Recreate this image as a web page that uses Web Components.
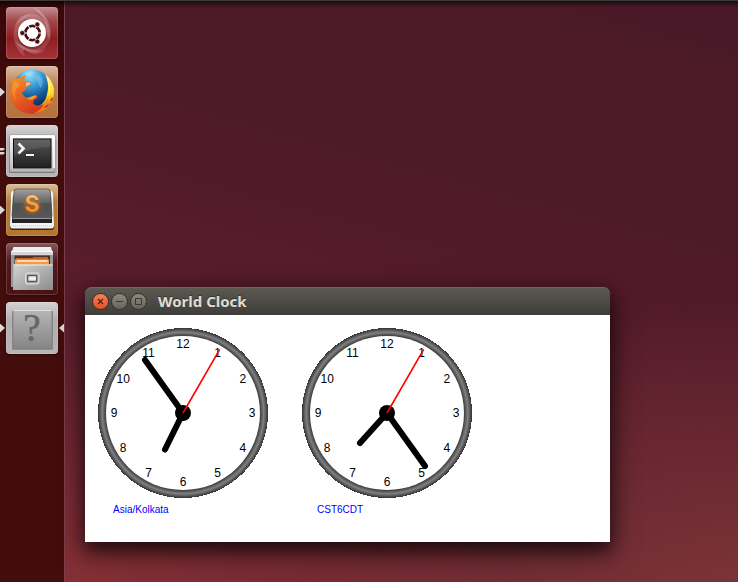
<!DOCTYPE html>
<html lang="en">
<head>
<meta charset="utf-8">
<title>World Clock</title>
<style>
html,body{height:100%;margin:0}
body{font-family:"Liberation Sans",Arial,sans-serif;overflow:hidden}
</style>
</head>
<body>
<desktop-shell>
  <launcher-bar slot="launcher">
    <launcher-tile label="Search your computer" tone="red">
      <svg viewBox="0 0 52 52" aria-hidden="true">
        <defs>
          <linearGradient id="sw" x1="0" y1="0" x2="1" y2="1"><stop offset="0" stop-color="#fff" stop-opacity=".45"/><stop offset="1" stop-color="#fff" stop-opacity=".05"/></linearGradient>
        </defs>
        <path d="M8 22C10 8 25 2 36 11C43 16 46 26 43 33C40 18 31 10 20 12C13 14 9 17 8 22Z" fill="#fff" opacity=".18"/>
        <path d="M26 0C37 4 45 14 45 27C44 36 39 43 31 45C22 46 14 42 10 35C18 42 31 42 37 34C45 23 39 8 26 0Z" fill="url(#sw)"/>
        <path d="M21 51C11 45 6 34 8 23C10 14 16 9 24 7C14 13 11 24 14 33C18 42 30 46 40 42C32 49 25 48 18 42C16 45 18 49 21 51Z" fill="#fff" opacity=".16"/>
        <circle cx="26" cy="28" r="14.500" fill="#500" opacity=".35"/>
        <circle cx="26" cy="26" r="14" fill="#fff"/>
        <circle cx="26.500" cy="26" r="7.200" fill="none" stroke="#4b0f12" stroke-width="2.800"/>
        <path d="M26.500 26H17M26.500 26L32 16.500M26.500 26L32 35.500M26.500 26H37M26.500 26L21 16.500M26.500 26L21 35.500" stroke="#fff"/>
        <circle cx="26.500" cy="26" r="5.600" fill="#fff"/>
        <g fill="#4b0f12" stroke="#fff" stroke-width=".6"><circle cx="16.300" cy="26" r="2.500"/><circle cx="31.300" cy="17.400" r="2.500"/><circle cx="31.300" cy="34.600" r="2.500"/></g>
      </svg>
    </launcher-tile>
    <launcher-tile label="Firefox Web Browser" tone="tan" windows="1">
      <svg viewBox="0 0 52 52" aria-hidden="true">
        <defs>
          <radialGradient id="globe" cx=".42" cy=".12" r=".9"><stop offset="0" stop-color="#9be1fb"/><stop offset=".35" stop-color="#3b9fd8"/><stop offset=".7" stop-color="#135591"/><stop offset="1" stop-color="#0f2456"/></radialGradient>
          <linearGradient id="fox" x1="0" y1="0" x2=".5" y2="1"><stop offset="0" stop-color="#f39a2c"/><stop offset=".45" stop-color="#ed6b23"/><stop offset="1" stop-color="#d83c1c"/></linearGradient>
          <linearGradient id="tail" x1="0" y1="0" x2="0" y2="1"><stop offset="0" stop-color="#fff7a0"/><stop offset=".5" stop-color="#ffd91f"/><stop offset="1" stop-color="#ee7d1d"/></linearGradient>
        </defs>
        <circle cx="26" cy="26.500" r="21.500" fill="#5d2607" opacity=".3"/>
        <circle cx="26.500" cy="22.500" r="19" fill="url(#globe)"/>
        <path d="M15 10C19 5 25 4 30 7C26 7 24 9 20 10C18 12 17 12 15 10ZM32 9C37 11 38 17 35 22C31 20 34 15 30 13Z" fill="#b0e4f4" opacity=".3"/>
        <path d="M39 8C45 13 49 20 48 28C47 38 39 46 29 47L26 42C34 41 40 36 41 28C43 22 42 14 39 8Z" fill="url(#tail)"/>
        <path d="M43 29C41 35 38 38 35 39L39 38C36 42 31 44 26 44L28 47C40 47 48 38 48 26C47 32 46 34 45 35L46 29Q44 34 42 36Z" fill="#f17a1a" opacity=".7"/>
        <path d="M40 11C44 18 44 25 42 31C46 24 44 16 40 11Z" fill="#fffbd2"/>
        <path d="M6 9C6 12 6 13 8 14C10 12 13 12 14 12C16 10 18 9 20 9C18 12 18 14 19 16C22 15 25 16 25 18C24 20 22 20 20 22C21 25 18 25 16 26C16 29 19 32 22 32C26 32 27 29 31 30C32 31 31 33 28 34C25 39 31 41 38 38C35 44 30 47.500 25 47.500C13 47.500 4 38 4 27C4 22 6 20 6 17C4 14 5 11 6 9Z" fill="url(#fox)"/>
        <path d="M8 15C5 21 6 31 12 37C7 30 8 23 14 19C12 17 11 15 8 15Z" fill="#f8a032" opacity=".65"/>
        <path d="M20 17C22 16 24 17 25 18C23 19 21 19 20 21Z" fill="#f5c5a1"/>
        <path d="M17 27C17 31 21 33 24 31C27 30 29 29 31 30C29 31 29 32 27 33C24 35 18 32 17 27Z" fill="#f99b35"/>
        <path d="M37 42L44 37L41 41ZM44 34L47 31L46 35Z" fill="#9a3324"/>
      </svg>
    </launcher-tile>
    <launcher-tile label="Terminal" tone="silver" windows="2">
      <svg viewBox="0 0 52 52" aria-hidden="true">
        <defs>
          <linearGradient id="frame" x1="0" y1="0" x2="0" y2="1"><stop offset="0" stop-color="#fff"/><stop offset="1" stop-color="#b4b4b4"/></linearGradient>
          <linearGradient id="screen" x1="0" y1="0" x2="0" y2="1"><stop offset="0" stop-color="#555"/><stop offset="1" stop-color="#202020"/></linearGradient>
        </defs>
        <rect x="3" y="11" width="46" height="37" rx="1" fill="#666" opacity=".7"/>
        <rect x="3.500" y="10" width="45.500" height="37" rx="1" fill="url(#frame)" stroke="#777" stroke-width=".5"/>
        <path d="M4.500 11H48V43" fill="none" stroke="#fff" stroke-width="1.500"/>
        <rect x="6.500" y="13" width="39.500" height="31" fill="#d8d8d8"/>
        <rect x="7.500" y="14" width="37.500" height="29" fill="url(#screen)" stroke="#111"/>
        <path d="M8 14.500H44.500V22C30 23 18 25 8 31Z" fill="#fff" opacity=".09"/>
        <path d="M12.500 18.500L17.500 23.500L12.500 28.500" fill="none" stroke="#f4f4f4" stroke-width="2.700"/>
        <path d="M20 30H28" stroke="#f4f4f4" stroke-width="2"/>
      </svg>
    </launcher-tile>
    <launcher-tile label="Sublime Text" tone="gold" windows="1">
      <svg viewBox="0 0 52 52" aria-hidden="true">
        <defs>
          <linearGradient id="key" x1="0" y1="0" x2="0" y2="1"><stop offset="0" stop-color="#a0a0a0"/><stop offset=".48" stop-color="#606060"/><stop offset=".5" stop-color="#505050"/><stop offset="1" stop-color="#585858"/></linearGradient>
          <linearGradient id="ess" x1="0" y1="0" x2="0" y2="1"><stop offset=".2" stop-color="#f6b974"/><stop offset=".8" stop-color="#ff8806"/></linearGradient>
          <filter id="glow" x="-.5" y="-.5" width="2" height="2"><feGaussianBlur stdDeviation="2"/></filter>
        </defs>
        <path d="M7 8Q5 8 5 12L4 43Q4 46 7 46H45Q48 46 48 43L47 12Q47 8 45 8Z" fill="#35251a"/>
        <path d="M7 7Q5 7 5 10L4 41Q4 44.500 7 44.500H45Q48 44.500 48 41L47 10Q47 7 45 7Z" fill="#f3f3f3"/>
        <path d="M5 42H47" stroke="#c5c5c5" stroke-dasharray="1 1"/>
        <path d="M7 12L6 36V39H46V36L45 12Z" fill="#222"/>
        <path d="M10 5H42Q44 5 44.300 8L46 31Q46 34.500 43 34.500H9Q6 34.500 6 31L8 8Q8 5 10 5Z" fill="url(#key)" stroke="#4b4b4b" stroke-width=".7"/>
        <path d="M6.500 34.500H45.500" stroke="#9b9b9b"/>
        <circle cx="26" cy="21" r="8" fill="#f58a1e" opacity=".4" filter="url(#glow)"/>
        <text x="26" y="28" text-anchor="middle" font-family="Inter,sans-serif" font-weight="700" font-size="23" fill="url(#ess)" stroke="#704019" stroke-width=".6" paint-order="stroke">S</text>
      </svg>
    </launcher-tile>
    <launcher-tile label="Files" tone="dark">
      <svg viewBox="0 0 52 52" aria-hidden="true">
        <defs>
          <linearGradient id="steel" x1="0" y1="0" x2="1" y2="1"><stop offset="0" stop-color="#d2d2d2"/><stop offset="1" stop-color="#8c8c8c"/></linearGradient>
        </defs>
        <path d="M6 8L7.500 4H45L46 8V12H6Z" fill="#eee"/>
        <path d="M5 8H47V44H5Z" fill="#999"/>
        <path d="M5 8H47V12H5Z" fill="#d6d6d6"/>
        <path d="M5 8.500H47" stroke="#fafafa"/>
        <path d="M8.500 12.500H44V24H8.500Z" fill="#43352d"/>
        <path d="M10 15H26L28 14H42V24H9Z" fill="#d75b25"/>
        <path d="M9 16.500H43V24H9Z" fill="#f29a45"/>
        <path d="M11 18H41.500" stroke="#fff4db" stroke-width="1.500"/>
        <path d="M7.500 21.500H46.500L47 47H7Z" fill="url(#steel)"/>
        <path d="M7.500 22H46.500" stroke="#eee"/>
        <rect x="19.500" y="30" width="13.500" height="11" rx="1.500" fill="#bbb" stroke="#e0e0e0"/>
        <rect x="21.700" y="32.500" width="9" height="6" rx=".5" fill="#eee" stroke="#555" stroke-width="1.300"/>
      </svg>
    </launcher-tile>
    <launcher-tile label="World Clock" tone="silver" windows="1" active>
      <svg viewBox="0 0 52 52" aria-hidden="true">
        <defs>
          <linearGradient id="plate" x1="0" y1="0" x2="0" y2="1"><stop offset="0" stop-color="#b5b5b5"/><stop offset="1" stop-color="#858585"/></linearGradient>
        </defs>
        <rect x="6" y="9" width="41" height="39" rx="1" fill="#777" opacity=".6"/>
        <rect x="7" y="8.500" width="39" height="38" rx="1" fill="url(#plate)" stroke="#808080"/>
        <path d="M7.500 8.500H45.500" stroke="#e4e4e4"/>
        <g font-family="Liberation Serif,serif" font-size="39" text-anchor="middle"><text x="26" y="39" fill="#666" stroke="#666" stroke-width=".5">?</text></g>
      </svg>
    </launcher-tile>
  </launcher-bar>
  <app-window heading="World Clock">
    <clock-face zone="Asia/Kolkata" hour="-18 36.500" minute="-38 -53" second="36.700 -63.600"></clock-face>
    <clock-face zone="CST6CDT" hour="-27 30" minute="38 53" second="36.700 -63.600"></clock-face>
  </app-window>
</desktop-shell>

<script>
class ShadowElement extends HTMLElement {
  connectedCallback() {
    if (this.shadowRoot) return;
    this.attachShadow({mode: "open"}).innerHTML = this.render();
  }
}

customElements.define("desktop-shell", class extends ShadowElement {
  render() {
    return `<style>
      :host{display:flex;min-height:100vh;box-sizing:border-box;border-top:1px solid #3c3b37;position:relative;
        background:
          radial-gradient(ellipse 70% 55% at 0% 108%,rgba(146,51,57,.8),rgba(146,51,57,0)),
          radial-gradient(ellipse 75% 60% at 105% 112%,rgba(139,62,60,.8),rgba(139,62,60,0)),
          linear-gradient(195deg,#4a1929 0%,#4d1928 30%,#591d2c 58%,#5e202e 75%,#702a31 100%)}
      :host::before{content:"";position:absolute;inset:0 0 auto;height:7px;background:linear-gradient(rgba(0,0,0,.6),transparent);pointer-events:none}
      main{flex:1;position:relative}
      ::slotted(app-window){position:absolute;left:20px;right:128px;top:286px}
    </style><slot name="launcher"></slot><main><slot></slot></main>`;
  }
});

customElements.define("launcher-bar", class extends ShadowElement {
  render() {
    return `<style>
      :host{display:block;flex:none;width:64px;background:linear-gradient(#3b0709,#430c0d 30%);border-right:1px solid #79404a}
      nav{display:flex;flex-direction:column;gap:7px;padding-top:6px}
    </style><nav aria-label="Launcher"><slot></slot></nav>`;
  }
});

customElements.define("launcher-tile", class extends ShadowElement {
  render() {
    const n = Number(this.getAttribute("windows") || 0);
    return `<style>
      :host{display:flex;align-items:center;color:#dcd8d6}
      :host([tone=red]){--tile:linear-gradient(#c29092 0,#a5484b 26%,#8f1c22 60%,#a23538 100%)}
      :host([tone=tan]){--tile:linear-gradient(#dcbba1 0,#bb8258 35%,#b5703d 100%)}
      :host([tone=silver]){--tile:linear-gradient(#d5d2d4 0,#b3afb1 35%,#b8b4b6 100%)}
      :host([tone=gold]){--tile:linear-gradient(#dbbd99 0,#b57b3b 35%,#b3762d 100%)}
      :host([tone=dark]){--tile:linear-gradient(#805a5e 0,#541b20 35%,#4b1115 100%)}
      .pips{width:6px;display:flex;flex-direction:column;gap:1px}
      .pips i{width:5px;height:9px;background:currentColor;clip-path:polygon(0 0,100% 50%,0 100%)}
      .pips.two i{height:3px;clip-path:polygon(0 0,60% 0,100% 50%,60% 100%,0 100%)}
      button{width:52px;height:52px;padding:0;border:0;border-radius:4px;background:var(--tile);
        box-shadow:inset 0 0 0 1px rgba(255,255,255,.16),0 1px 2px rgba(0,0,0,.4);display:block}
      ::slotted(svg){display:block;width:52px;height:52px}
      .focus{width:5px;height:9px;margin-left:1px;background:currentColor;clip-path:polygon(100% 0,0 50%,100% 100%)}
    </style>
    <span class="pips ${n > 1 ? "two" : ""}">${"<i></i>".repeat(n)}</span>
    <button type="button" aria-label="${this.getAttribute("label")}"><slot></slot></button>
    ${this.hasAttribute("active") ? '<span class="focus"></span>' : ""}`;
  }
});

customElements.define("app-window", class extends ShadowElement {
  render() {
    return `<style>
      :host{display:block;border-radius:7px 7px 0 0;box-shadow:0 8px 26px 2px rgba(0,0,0,.6),0 8px 14px rgba(0,0,0,.35)}
      header{display:flex;align-items:center;height:28px;padding-left:7px;box-sizing:border-box;gap:2px;
        border-radius:7px 7px 0 0;background:linear-gradient(#5d5a52,#3e3d39);box-shadow:inset 0 1px #6b6860}
      button{width:17px;height:17px;padding:0;border:1px solid #33322e;border-radius:50%;background:linear-gradient(#8b8980,#66645d);flex:none}
      button.close{background:linear-gradient(#f4815b,#e2501f);border-color:#4a2b20}
      svg{display:block;width:15px;height:15px;fill:none;stroke:#3a3935}
      .close svg{stroke:#572312;stroke-width:1.300}
      h1{margin:0 0 0 9px;font:700 15px/20px "Noto Sans","Open Sans",sans-serif;color:#dfdbd2;text-shadow:0 -1px rgba(0,0,0,.4)}
      section{display:flex;flex-wrap:wrap;gap:34px;padding:13px 13px 25px;background:#fff}
    </style>
    <header>
      <button type="button" class="close" aria-label="Close"><svg viewBox="0 0 15 15"><path d="M5 5L10 10M10 5L5 10"/></svg></button>
      <button type="button" aria-label="Minimize"><svg viewBox="0 0 15 15"><path d="M4 7.500H11"/></svg></button>
      <button type="button" aria-label="Maximize"><svg viewBox="0 0 15 15"><path d="M4.500 4.500H10.500V10.500H4.500Z"/></svg></button>
      <h1>${this.getAttribute("heading")}</h1>
    </header>
    <section><slot></slot></section>`;
  }
});

customElements.define("clock-face", class extends ShadowElement {
  hand(name, cls) {
    const [x, y] = this.getAttribute(name).split(" ");
    return `<line class="${cls}" x1="0" y1="0" x2="${x}" y2="${y}"/>`;
  }
  render() {
    let digits = "";
    for (let n = 1; n <= 12; n++) {
      const a = n * Math.PI / 6;
      digits += `<text x="${(69 * Math.sin(a)).toFixed(1)}" y="${(4 - 69 * Math.cos(a)).toFixed(1)}">${n}</text>`;
    }
    return `<style>
      :host{display:block}
      figure{margin:0}
      svg{display:block;width:170px;height:170px}
      text{font-size:12px;text-anchor:middle;fill:#000}
      .thick{stroke:#000;stroke-width:6;stroke-linecap:round}
      .thin{stroke:#f00;stroke-width:1.600}
      figcaption{padding:5px 0 0 15px;font-size:10px;line-height:14px;color:#00f}
    </style>
    <figure>
      <svg viewBox="-85 -85 170 170" role="img" aria-label="Clock for ${this.getAttribute("zone")}">
        <defs><radialGradient id="rim" gradientUnits="userSpaceOnUse" cx="0" cy="0" r="85">
          <stop offset=".9" stop-color="#333"/><stop offset=".95" stop-color="#808080"/><stop offset="1" stop-color="#333"/>
        </radialGradient></defs>
        <circle r="85" fill="url(#rim)" shape-rendering="crispEdges"/>
        <circle r="77" fill="#fff"/>
        ${digits}
        ${this.hand("hour", "thick")}${this.hand("minute", "thick")}
        <circle r="8"/>
        ${this.hand("second", "thin")}
      </svg>
      <figcaption>${this.getAttribute("zone")}</figcaption>
    </figure>`;
  }
});
</script>
</body>
</html>
